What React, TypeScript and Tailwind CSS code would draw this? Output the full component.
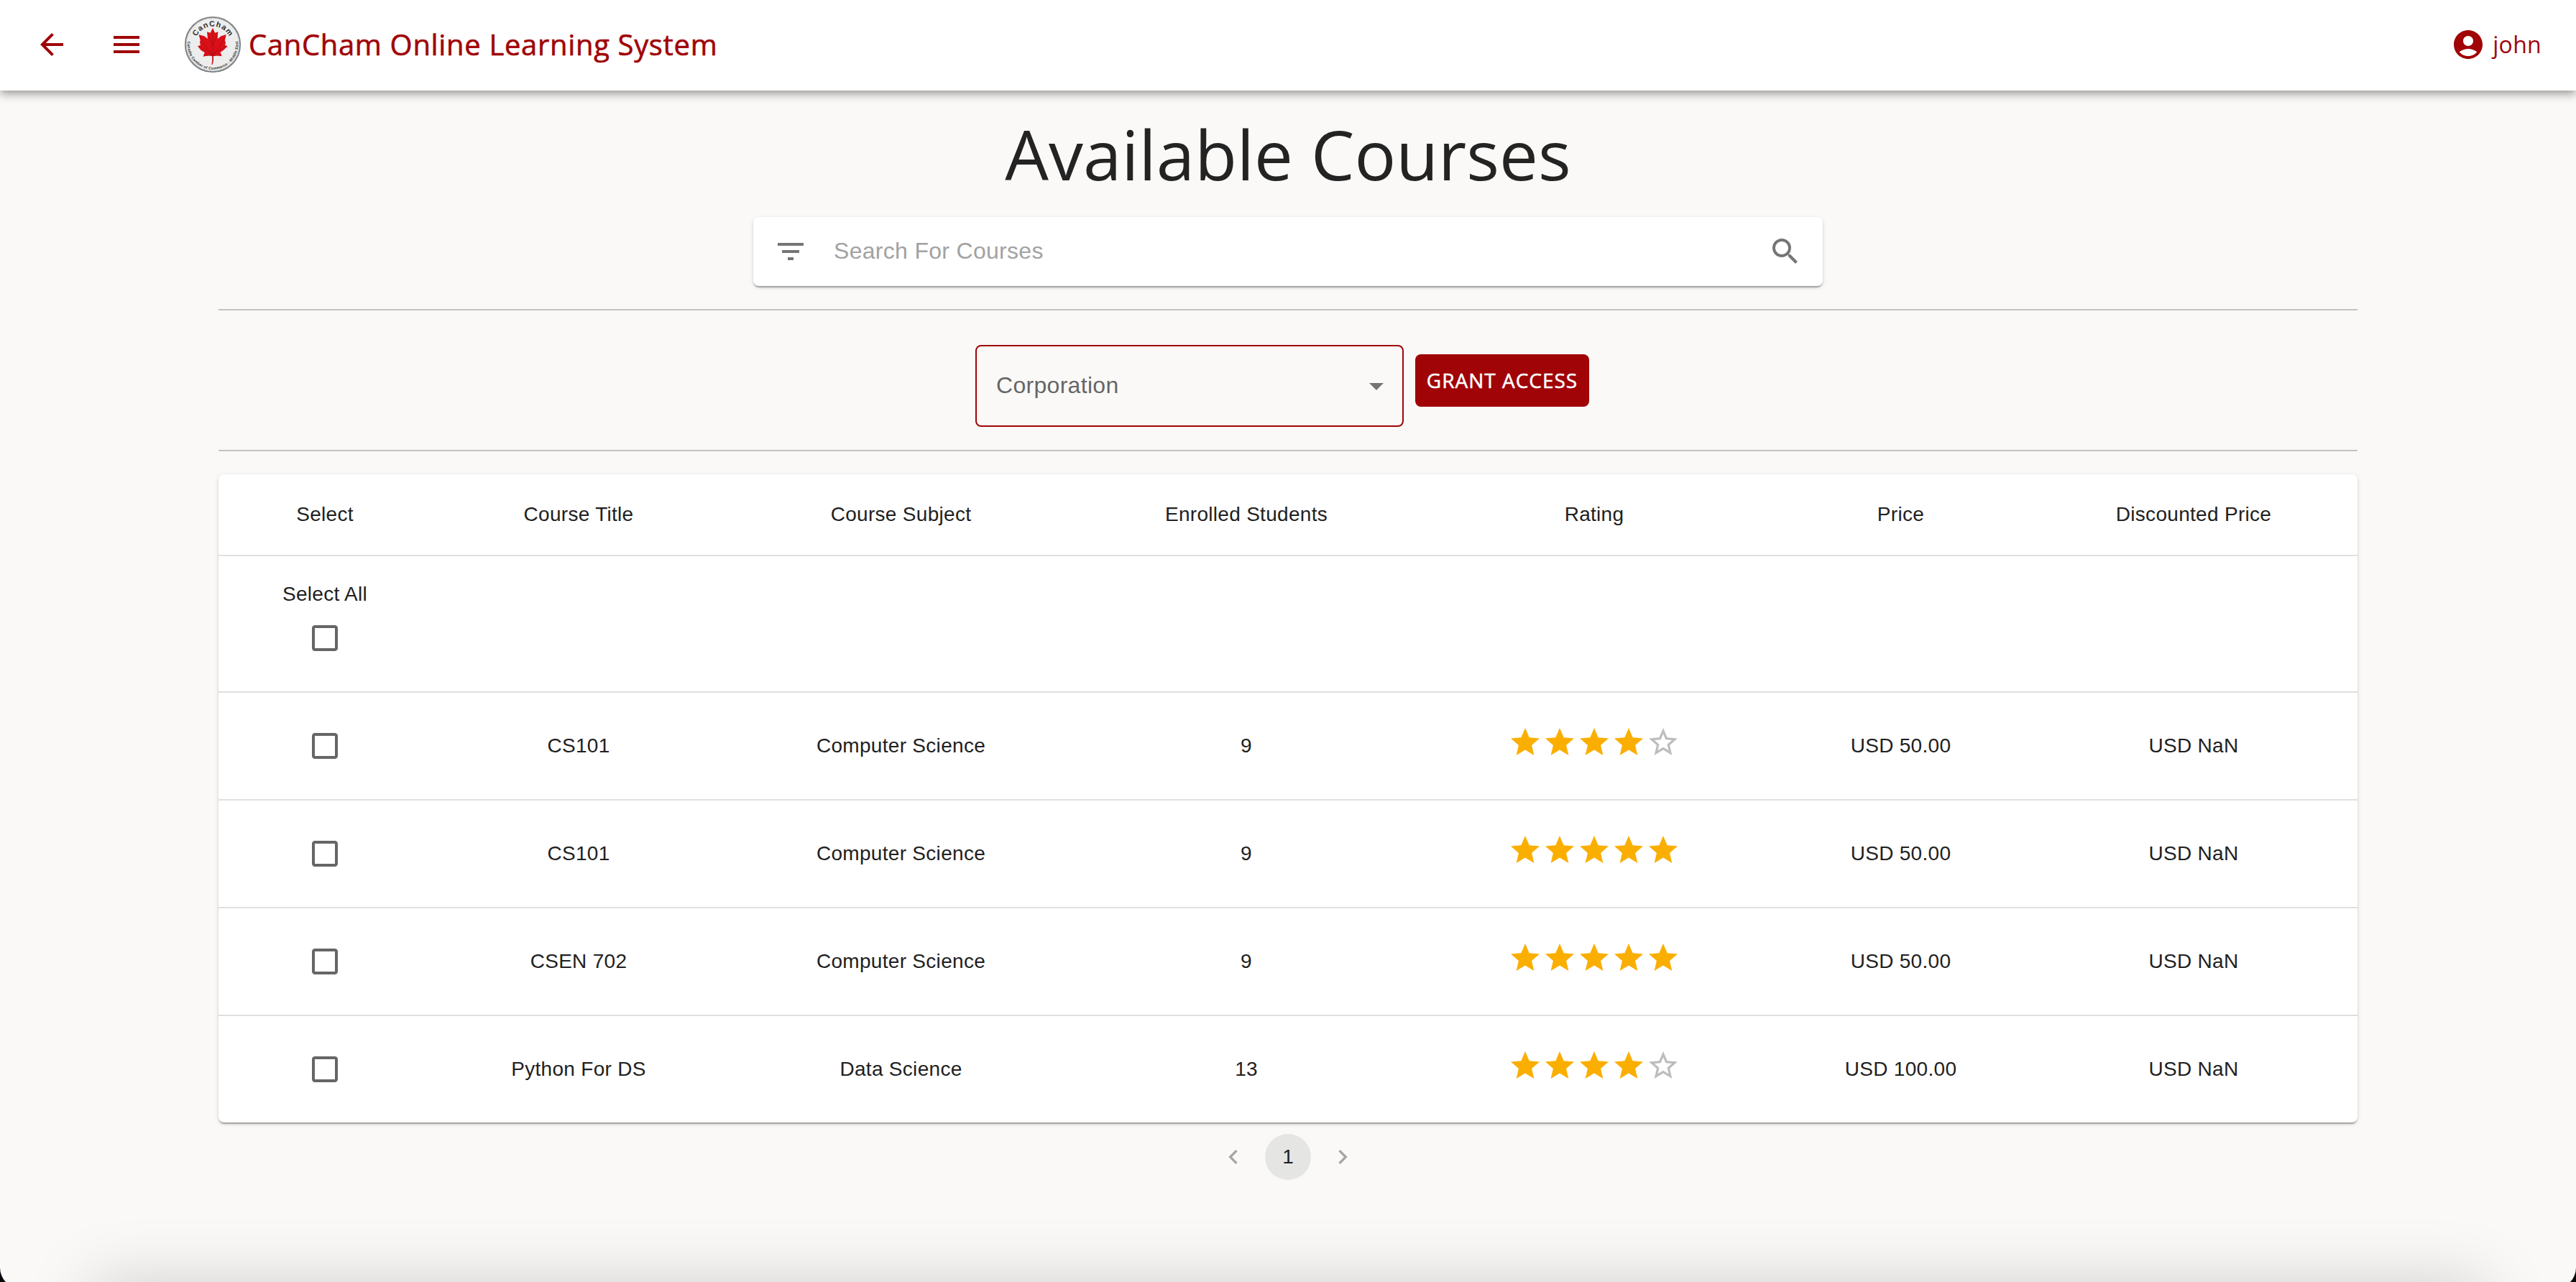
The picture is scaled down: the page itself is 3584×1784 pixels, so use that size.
import React from "react";
import {
  MdArrowBack,
  MdArrowDropDown,
  MdCheckBoxOutlineBlank,
  MdChevronLeft,
  MdChevronRight,
  MdFilterList,
  MdMenu,
  MdSearch,
  MdStar,
  MdStarBorder,
} from "react-icons/md";

type Course = {
  title: string;
  subject: string;
  enrolled: number;
  rating: number;
  price: string;
  discounted: string;
};

const courses: Course[] = [
  { title: "CS101", subject: "Computer Science", enrolled: 9, rating: 4, price: "USD 50.00", discounted: "USD NaN" },
  { title: "CS101", subject: "Computer Science", enrolled: 9, rating: 5, price: "USD 50.00", discounted: "USD NaN" },
  { title: "CSEN 702", subject: "Computer Science", enrolled: 9, rating: 5, price: "USD 50.00", discounted: "USD NaN" },
  { title: "Python For DS", subject: "Data Science", enrolled: 13, rating: 4, price: "USD 100.00", discounted: "USD NaN" },
];

const headings = ["Select", "Course Title", "Course Subject", "Enrolled Students", "Rating", "Price", "Discounted Price"];

const rowGrid = "grid grid-cols-[296px_410px_487px_474px_494px_359px_456px] items-center text-center";
const paperShadow =
  "shadow-[0_4px_2px_-2px_rgba(0,0,0,0.2),0_2px_2px_0_rgba(0,0,0,0.14),0_2px_6px_0_rgba(0,0,0,0.12)]";

function Logo() {
  return (
    <svg viewBox="48 36 240 240" className="size-20 shrink-0">
      <defs>
        <path id="arcTop" d="M 92 156 A 76 76 0 0 1 244 156" />
        <path id="arcBottom" d="M 64 137 A 105.5 105.5 0 1 0 272 137" />
      </defs>
      <circle cx="168" cy="156" r="114.5" fill="#ededed" stroke="#7b7e80" strokeWidth="5.5" />
      <circle cx="168" cy="156" r="110.5" fill="none" stroke="#b9bbbc" strokeWidth="2.5" />
      <path
        d="M168 86 L177 107 L190 103 L188 132 L203 121 L224 114 L219 138 L222 150 L219 158 L230 163 L213 179 L200 188 L206 205 L187 202 L171 205 Q173 224 167 240 L163 239 Q168 222 166 205 L150 202 L128 206 L134 189 L119 180 L105 163 L117 158 L114 148 L116 138 L110 115 L133 121 L147 132 L144 103 L158 107 Z"
        fill="#db0f18"
      />
      <path
        d="M168 96 L168 230 M168 200 L140 166 L114 122 M168 200 L196 166 L220 122 M168 196 L112 164 M168 196 L224 164 M168 200 L134 202 M168 200 L202 202 M168 160 L152 122 M168 160 L184 122"
        fill="none"
        stroke="#9c0d14"
        strokeWidth="2"
      />
      <text className="font-['Liberation_Sans',sans-serif] font-bold" fontSize="32" fill="#2f2f2f">
        <textPath href="#arcTop" startOffset="50%" textAnchor="middle" textLength="170">
          CanCham
        </textPath>
      </text>
      <text className="font-['Liberation_Sans',sans-serif] font-bold" fontSize="15.5" fill="#333333">
        <textPath href="#arcBottom" startOffset="50%" textAnchor="middle" textLength="356">
          Canadia Camber of Commerce - Middle East
        </textPath>
      </text>
    </svg>
  );
}

function AccountIcon() {
  return (
    <svg viewBox="0 0 24 24" fill="currentColor" className="size-12">
      <path d="M12 2C6.48 2 2 6.48 2 12s4.48 10 10 10 10-4.48 10-10S17.52 2 12 2zm0 4c1.93 0 3.5 1.57 3.5 3.5S13.93 13 12 13s-3.5-1.57-3.5-3.5S10.07 6 12 6zm0 14c-2.03 0-4.43-.82-6.14-2.88C7.55 15.8 9.68 15 12 15s4.45.8 6.14 2.12C16.43 19.18 14.03 20 12 20z" />
    </svg>
  );
}

function Header() {
  return (
    <header className="relative z-10 flex h-[126px] items-center bg-white pb-0.5 pl-12 pr-12 text-[#a00407] shadow-[0_4px_8px_-2px_rgba(0,0,0,0.2),0_8px_10px_0_rgba(0,0,0,0.14),0_2px_20px_0_rgba(0,0,0,0.12)]">
      <MdArrowBack className="size-12" />
      <MdMenu className="ml-14 size-12" />
      <div className="ml-14 flex items-center">
        <Logo />
        <span className="ml-[10px] font-['Open_Sans',sans-serif] text-[40px] font-medium leading-[64px] tracking-[0.66px] [-webkit-text-stroke:0.6px_#a00407]">
          CanCham Online Learning System
        </span>
      </div>
      <div className="ml-auto flex items-center">
        <AccountIcon />
        <span className="ml-[10px] font-['Open_Sans',sans-serif] text-[32px] leading-[48px] tracking-[0.3px]">john</span>
      </div>
    </header>
  );
}

function Rating({ value }: { value: number }) {
  return (
    <div className="flex justify-center pb-[10px]">
      {[1, 2, 3, 4, 5].map((n) =>
        n <= value ? (
          <MdStar key={n} className="size-12 text-[#faaf00]" />
        ) : (
          <MdStarBorder key={n} className="size-12 text-[#bdbdbd]" />
        ),
      )}
    </div>
  );
}

function Checkbox() {
  return <MdCheckBoxOutlineBlank className="mx-auto size-12 text-[#666666]" />;
}

function CourseTable() {
  return (
    <section
      className={`mt-8 rounded-lg bg-white text-[28px] leading-[40px] tracking-[0.3px] text-[#212121] ${paperShadow}`}
    >
      <div className={`${rowGrid} h-[114px] border-b-2 border-[#e0e0e0]`}>
        {headings.map((h) => (
          <div key={h}>{h}</div>
        ))}
      </div>
      <div className={`${rowGrid} h-[190px] border-b-2 border-[#e0e0e0]`}>
        <div className="flex flex-col pb-[17px]">
          <span>Select All</span>
          <div className="mt-[17px]">
            <Checkbox />
          </div>
        </div>
      </div>
      {courses.map((c, i) => (
        <div key={i} className={`${rowGrid} h-[150px] border-b-2 border-[#e0e0e0] last:h-[148px] last:border-b-0`}>
          <Checkbox />
          <div>{c.title}</div>
          <div>{c.subject}</div>
          <div>{c.enrolled}</div>
          <Rating value={c.rating} />
          <div>{c.price}</div>
          <div>{c.discounted}</div>
        </div>
      ))}
    </section>
  );
}

export default function App() {
  return (
    <div className="h-[1784px] w-[3584px] overflow-hidden bg-[#05070b] font-['Liberation_Sans',sans-serif]">
      <div className="relative h-[1793px] overflow-hidden rounded-b-[29px] bg-[#faf9f7]">
        <Header />
        <main className="mx-auto w-[2976px]">
          <h1 className="pt-8 text-center font-['Open_Sans',sans-serif] text-[96px] leading-[112px] text-[#232323]">
            Available Courses
          </h1>
          <div className={`mx-auto mt-8 flex h-24 w-[1488px] items-center rounded-lg bg-white px-7 text-[#757575] ${paperShadow}`}>
            <MdFilterList className="size-12" />
            <span className="ml-9 flex-1 pb-0.5 text-[32px] leading-[46px] tracking-[0.3px] text-[#a2a2a2]">Search For Courses</span>
            <MdSearch className="size-12" />
          </div>
          <div className="mt-8 h-0.5 bg-[#c5c4c2]" />
          <div className="mt-12 flex items-start justify-center pr-4">
            <div className="flex h-[114px] w-[596px] items-center rounded-lg border-2 border-[#a00407] pl-[27px] pr-3">
              <span className="flex-1 pb-[3px] text-[32px] leading-[46px] tracking-[0.3px] text-[#666666]">Corporation</span>
              <MdArrowDropDown className="size-12 text-[#757575]" />
            </div>
            <button className="ml-4 mt-[13px] flex h-[73px] w-[242px] items-center justify-center rounded-lg bg-[#a00407] font-['Open_Sans',sans-serif] text-[28px] font-medium leading-[49px] tracking-[1px] text-white [-webkit-text-stroke:0.5px_#ffffff]">
              GRANT ACCESS
            </button>
          </div>
          <div className="mt-8 h-0.5 bg-[#c5c4c2]" />
          <CourseTable />
          <nav className="mt-4 flex items-center justify-center text-[#a5a5a4]">
            <MdChevronLeft className="size-10" />
            <span className="mx-6 flex size-16 items-center justify-center rounded-full bg-[#e5e5e4] text-[28px] leading-[40px] text-[#212121]">
              1
            </span>
            <MdChevronRight className="size-10" />
          </nav>
        </main>
        <div className="absolute left-[140px] right-[140px] top-[1798px] h-20 shadow-[0_0_90px_14px_rgba(0,0,0,0.17)]" />
      </div>
    </div>
  );
}
